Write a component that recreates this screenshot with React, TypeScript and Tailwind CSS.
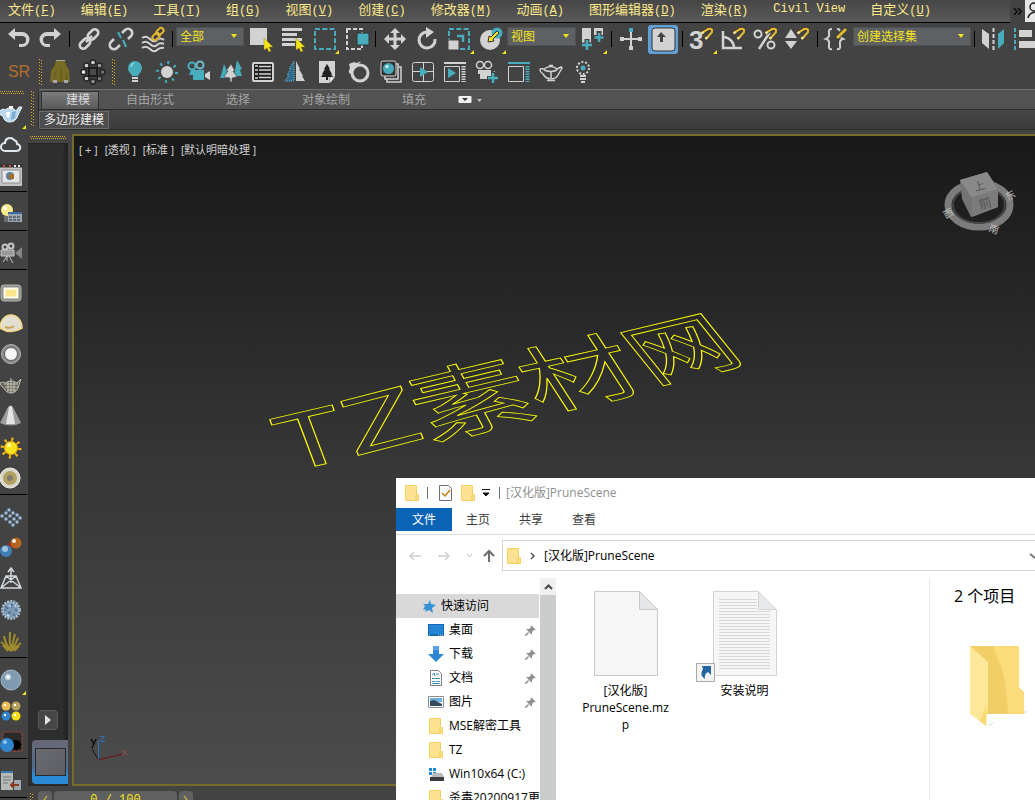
import type { ReactNode } from "react"

const LIGHT = "#d2d2d2"
const TEAL = "#47adbd"
const YELLOW = "#f5e31b"

const uiFont = "font-['Open_Sans','Noto_Sans_CJK_SC',sans-serif]"
const maxFont = "font-['Liberation_Sans','Noto_Sans_CJK_SC',sans-serif]"

const menuItems = [
  { label: "文件", key: "F" },
  { label: "编辑", key: "E" },
  { label: "工具", key: "T" },
  { label: "组", key: "G" },
  { label: "视图", key: "V" },
  { label: "创建", key: "C" },
  { label: "修改器", key: "M" },
  { label: "动画", key: "A" },
  { label: "图形编辑器", key: "D" },
  { label: "渲染", key: "R" },
  { label: "Civil View", key: "" },
  { label: "自定义", key: "U" },
]

function Icon({ children, size = 32 }: { children: ReactNode; size?: number }) {
  return (
    <svg viewBox={`0 0 ${size} ${size}`} width={size} height={size} fill="none" aria-hidden="true">
      {children}
    </svg>
  )
}

function Tool({ label, children }: { label: string; children: ReactNode }) {
  return (
    <button type="button" aria-label={label} className="size-8 shrink-0 hover:bg-white/10">
      <Icon>{children}</Icon>
    </button>
  )
}

function Sep() {
  return (
    <div className="flex h-8 w-[7px] shrink-0 items-center justify-center">
      <div className="h-4 w-px bg-black" />
    </div>
  )
}

function GripV({ className }: { className: string }) {
  return (
    <svg className={className} width="3" aria-hidden="true">
      <path d="M.5 0V100" stroke="#d9ae22" strokeDasharray="1 2" />
      <path d="M2.5 1V100" stroke="#d9ae22" strokeDasharray="1 2" />
    </svg>
  )
}

function GripH({ className }: { className: string }) {
  return (
    <svg className={className} height="3" aria-hidden="true">
      <path d="M0 .5H100" stroke="#d9ae22" strokeDasharray="1 1" />
      <path d="M1 2.5H100" stroke="#d9ae22" strokeDasharray="1 1" />
    </svg>
  )
}

function Dropdown({ label, value, className }: { label: string; value: string; className: string }) {
  return (
    <div className={`relative mt-1 h-[19px] shrink-0 ${className}`}>
      <select
        aria-label={label}
        className="block h-full w-full appearance-none border border-[#4e5052] bg-[#5d6164] px-[3px] text-[12px] leading-4 text-[#f5e31b]"
      >
        <option>{value}</option>
      </select>
      <svg className="pointer-events-none absolute right-[7px] top-[7px]" width="6" height="4" aria-hidden="true">
        <path d="M0 0h6L3 4z" fill={YELLOW} />
      </svg>
    </div>
  )
}

const corner = <path d="M31 27v4h-4z" fill={YELLOW} />
const cursor = <path d="M20 15v12l3-2 2 4 2-1-2-4h4z" fill={YELLOW} stroke="#8a7d10" strokeWidth=".4" />
const magnet = (
  <g fill="none">
    <path d="M16 10l6-4q5-1 4 3l-6 7" stroke="#3a3a3a" strokeWidth="4" />
    <path d="M16 10l6-4q5-1 4 3l-6 7" stroke="#e2b632" strokeWidth="2.200" />
    <path d="M15.500 10.500l2-1.500M21 14l-1.500 2" stroke="#f4e9a0" strokeWidth="2.200" />
  </g>
)

function MainToolbar() {
  return (
    <div className="flex h-[33px] items-start overflow-hidden pl-[2px]">
      <Tool label="撤消">
        <path d="M6 11l7-6v4h7a7 7 0 0 1 0 15h-3v-3h3a4 4 0 0 0 0-8h-7v4z" fill={LIGHT} />
      </Tool>
      <Tool label="重做">
        <path d="M27 11l-7-6v4h-7a7 7 0 0 0 0 15h3v-3h-3a4 4 0 0 1 0-8h7v4z" fill={LIGHT} />
      </Tool>
      <Sep />
      <Tool label="链接">
        <g stroke={LIGHT} strokeWidth="2.6">
          <rect x="14" y="8" width="12" height="7" rx="3.5" transform="rotate(-45 20 11.500)" />
          <rect x="6" y="17" width="12" height="7" rx="3.5" transform="rotate(-45 12 20.500)" />
          <path d="M13 19l6-6" />
        </g>
      </Tool>
      <Tool label="断开链接">
        <g stroke={LIGHT} strokeWidth="2.6">
          <path d="M17 10l3-3a4 4 0 0 1 6 6l-3 3" />
          <path d="M15 22l-3 3a4 4 0 0 1-6-6l3-3" />
        </g>
        <path d="M13 9l3 6M18 17l3 7" stroke={TEAL} strokeWidth="2" />
      </Tool>
      <Tool label="绑定">
        <path d="M5 15q4-3 8 1t7 1 7 0M5 20q4-3 8 1t7 1 7-1M5 25q4-3 8 1t7 1 7-2" stroke={LIGHT} strokeWidth="2" />
        <g stroke="#3a3a3a" strokeWidth="4">
          <path d="M17 15l8-8" strokeWidth="8" />
        </g>
        <g stroke="#e2b632" strokeWidth="2">
          <rect x="19" y="6" width="8" height="5" rx="2.500" transform="rotate(-45 23 8.500)" />
          <rect x="15" y="11" width="8" height="5" rx="2.500" transform="rotate(-45 19 13.500)" />
        </g>
      </Tool>
      <Sep />
      <Dropdown label="选择过滤器" value="全部" className="w-[68px]" />
      <Tool label="选择对象">
        <path d="M6 5h17v17H6z" fill={LIGHT} />
        {cursor}
      </Tool>
      <Tool label="按名称选择">
        <path d="M6 6.500h20M6 11.500h15M6 16.500h20M6 21.500h13" stroke={LIGHT} strokeWidth="3" />
        {cursor}
      </Tool>
      <Tool label="矩形选择区域">
        <path d="M7 6h20v20H7z" stroke={TEAL} strokeWidth="2" strokeDasharray="5 2.300" />
        {corner}
      </Tool>
      <Tool label="窗口交叉">
        <path d="M7 6h15v20H7z" stroke={LIGHT} strokeWidth="2" strokeDasharray="4 2" />
        <path d="M17 10h12v12H17z" fill={TEAL} stroke="#333" />
      </Tool>
      <Sep />
      <Tool label="移动">
        <path
          d="M16 5l5 5h-3.500v4.500H22V11l5 5-5 5v-3.500h-4.500V22H21l-5 5-5-5h3.500v-4.500H10V21l-5-5 5-5v3.500h4.500V10H11z"
          fill={LIGHT}
        />
      </Tool>
      <Tool label="旋转">
        <path d="M16 9a8 8 0 1 0 8 7" stroke={LIGHT} strokeWidth="3" />
        <path d="M15 4l8 5-8 6z" fill={LIGHT} />
      </Tool>
      <Tool label="缩放">
        <path d="M6 6h20v20H6z" stroke={TEAL} strokeWidth="2" strokeDasharray="5 2.300" />
        <path d="M5 17h11v10H5z" fill={LIGHT} stroke="#444" />
        <path d="M14 13h6v6" stroke={TEAL} strokeWidth="2.500" />
        {corner}
      </Tool>
      <Tool label="放置">
        <circle cx="15" cy="17" r="10" fill={LIGHT} />
        <circle cx="22" cy="10" r="5.500" fill={TEAL} />
        <path d="M13 19l1-6 2 1 6-6 2 2-6 6 1 2z" fill={YELLOW} stroke="#333" />
        {corner}
      </Tool>
      <Dropdown label="参考坐标系" value="视图" className="w-[69px]" />
      <Tool label="使用轴点中心">
        <path d="M6 5h9v17H6zM18 5h9v12h-9z" fill={LIGHT} />
        <path d="M11 16v12M5 22h12M23 8v13M17 14.500h12" stroke="#434343" strokeWidth="5" />
        <path d="M11 17v10M6 22h10M23 10v9M18.500 14.500h9" stroke={TEAL} strokeWidth="2.500" />
        {corner}
      </Tool>
      <Sep />
      <Tool label="选择并操纵">
        <path d="M16 8v16M8 16h16" stroke={LIGHT} strokeWidth="2" />
        <path d="M14 5h4v4h-4z" fill={TEAL} />
        <path d="M14 23h4v4h-4zM5 14h4v4H5zM23 14h4v4h-4z" fill={LIGHT} />
      </Tool>
      <button type="button" aria-label="键盘快捷键覆盖切换" aria-pressed="true" className="size-8 shrink-0">
        <Icon>
          <rect x="1" y="2" width="30" height="29" rx="3" fill="#63a0d8" />
          <rect x="5" y="5" width="23" height="23" rx="3" fill={LIGHT} stroke="#333" />
          <path d="M14 9l5 5h-3v5h-3v-5h-3z" fill="#444" />
        </Icon>
      </button>
      <Sep />
      <Tool label="捕捉开关">
        <text x="3" y="26" fontSize="26" fontWeight="700" fill={LIGHT} className="font-['Liberation_Sans',sans-serif]">
          3
        </text>
        {magnet}
        {corner}
      </Tool>
      <Tool label="角度捕捉">
        <path d="M5 8v17h19M6 14a11 11 0 0 1 10 11" stroke={LIGHT} strokeWidth="2.500" />
        {magnet}
      </Tool>
      <Tool label="百分比捕捉">
        <circle cx="8" cy="11" r="3.500" stroke={LIGHT} strokeWidth="2" />
        <circle cx="21" cy="22" r="3.500" stroke={LIGHT} strokeWidth="2" />
        <path d="M20 9L9 26" stroke={LIGHT} strokeWidth="2.500" />
        {magnet}
      </Tool>
      <Tool label="微调器捕捉">
        <path d="M9 6l6 9H3zM9 26l6-8H3z" fill={LIGHT} />
        {magnet}
      </Tool>
      <Sep />
      <Tool label="编辑命名选择集">
        <path d="M11 6q-4 0-3 4t-3 6q4 1 3 6t3 4M16 6q4 0 3 4t3 6q-4 1-3 6t-3 4" stroke={LIGHT} strokeWidth="2" />
        <path d="M25 5L15 16" stroke="#3a3a3a" strokeWidth="5" />
        <path d="M25 6l-9 9" stroke="#e2b632" strokeWidth="3" />
      </Tool>
      <Dropdown label="命名选择集" value="创建选择集" className="w-[118px]" />
      <Sep />
      <Tool label="镜像">
        <path d="M4 6l7 5v15l-7-6z" fill={LIGHT} />
        <path d="M26 6l-6 5v15l6-6z" fill={TEAL} />
        <path d="M15.500 5v23" stroke={LIGHT} strokeWidth="2" strokeDasharray="4 2" />
      </Tool>
      <Tool label="对齐">
        <path d="M5 5v23" stroke={TEAL} strokeWidth="2" strokeDasharray="4 2" />
        <path d="M9 7h13v7H9zM9 18h19v7H9z" fill={LIGHT} />
      </Tool>
    </div>
  )
}

function SecondToolbar() {
  return (
    <div className="flex h-8 items-center overflow-hidden pl-[3px]">
      <button type="button" className="size-8 shrink-0 text-center text-[16px] text-[#b3702e]">
        SR
      </button>
      <div className="w-[9px] shrink-0 pl-1">
        <GripV className="h-[27px]" />
      </div>
      <Tool label="布料">
        <path d="M12 4h9l1 5 3 5 1 12H6l1-11 4-6z" fill="#786b24" />
        <path d="M12 4.500h9" stroke="#aaa" />
        <path d="M12 15l-2 10M17 13v12M22 17l1 8" stroke="#615920" />
        <path d="M9 24h4v3H9zM20 24h4v3h-4z" fill="#a9a9a9" />
      </Tool>
      <Tool label="光环">
        <g fill="#cfcfcf" stroke="#242424" strokeWidth="1.500">
          <circle cx="17" cy="6.500" r="2.600" />
          <circle cx="17" cy="25.500" r="2.600" fill="#8a8a8a" />
          <circle cx="7.500" cy="16" r="2.600" fill="#f2f2f2" />
          <circle cx="26.500" cy="16" r="2.600" fill="#6c6c6c" />
          <circle cx="10.500" cy="9.500" r="2.600" />
          <circle cx="23.500" cy="9.500" r="2.600" fill="#9a9a9a" />
          <circle cx="10.500" cy="22.500" r="2.600" />
          <circle cx="23.500" cy="22.500" r="2.600" fill="#777" />
        </g>
        <rect x="13" y="12" width="8" height="8" stroke="#1d1d1d" strokeWidth="2" fill="#4a4a4a" />
      </Tool>
      <div className="w-[11px] shrink-0 pl-1">
        <GripV className="h-[27px]" />
      </div>
      <Tool label="灯光">
        <path d="M16 5a7 7 0 0 1 7 7c0 4-3 5-4 8h-6c-1-3-4-4-4-8a7 7 0 0 1 7-7z" fill={TEAL} />
        <path d="M13 22h6M13 25h6" stroke={LIGHT} strokeWidth="2" />
        <path d="M12 11q0-3 3-4" stroke="#bfe6ec" />
      </Tool>
      <Tool label="太阳">
        <circle cx="16" cy="16" r="6" fill={LIGHT} />
        <circle cx="16" cy="16" r="9.500" stroke={TEAL} strokeWidth="3" strokeDasharray="2 5.460" />
      </Tool>
      <Tool label="摄影机">
        <circle cx="9" cy="10" r="3.500" stroke={TEAL} strokeWidth="2" />
        <circle cx="17" cy="9" r="3.500" stroke="#6fbccb" strokeWidth="2" />
        <path d="M8 14h13v10H10v-5H6z" fill={TEAL} />
        <path d="M22 18l5-3v9l-5-3z" fill={LIGHT} />
      </Tool>
      <Tool label="森林">
        <path d="M9 8l4 9-1 5H5l2-6zM22 4l5 9-2 1 2 6h-8z" fill={TEAL} />
        <path d="M16 8l4 7h-2l4 6-5 1v4h-2v-4l-6-1 4-6h-2z" fill={LIGHT} stroke="#434343" strokeWidth=".6" />
      </Tool>
      <Tool label="列表">
        <rect x="6" y="7" width="20" height="18" rx="1" stroke={LIGHT} strokeWidth="2" fill="#222" />
        <path d="M8 10h3M8 14h3M8 18h3M8 22h3M12 10.500h12M12 14h12M12 18h12M12 21.500h12" stroke={LIGHT} strokeWidth="1.500" />
      </Tool>
      <Tool label="树木对称">
        <path d="M15 5v20H6l4-6H8l4-6h-2z" fill="#2d6c8f" stroke="#75b5cc" strokeDasharray="1 1" />
        <path d="M17 5l4 8h-1l4 7h-1l3 5h-9z" fill={LIGHT} />
      </Tool>
      <Tool label="植物库">
        <path d="M8 5h16v16l-5 6H8z" fill={LIGHT} />
        <path d="M16 8l3 5h-1l3 5h-1l2 3h-5v3h-2v-3h-5l2-3h-1l3-5h-1z" fill="#222" />
        <path d="M24 21h-5v6z" fill="#fff" stroke="#555" strokeWidth=".5" />
      </Tool>
      <Tool label="环">
        <circle cx="17" cy="17" r="8" stroke={LIGHT} strokeWidth="3" />
        <path d="M6 8q5-3 8-1l4-2-3 4-5 3-2 6q-4-1-1-6z" fill={LIGHT} />
      </Tool>
      <Tool label="材质">
        <path d="M12 23v3h14V11h-3M10 20v3h13V8h-3" stroke={LIGHT} strokeWidth="1.500" />
        <rect x="6" y="5" width="15" height="15" rx="2" stroke={LIGHT} fill="#333" />
        <circle cx="13.500" cy="12.500" r="5.500" fill={TEAL} />
        <circle cx="12" cy="10.500" r="1.500" fill="#e6f7fa" />
      </Tool>
      <Tool label="渲染设置">
        <rect x="5.500" y="6.500" width="21" height="19" rx="2" stroke={LIGHT} />
        <path d="M5 15.500h22M16.500 6v20" stroke={LIGHT} />
        <path d="M13 11l8 5-8 5z" fill={TEAL} />
      </Tool>
      <Tool label="渲染帧">
        <path d="M5 7h22" stroke={LIGHT} strokeWidth="2" />
        <path d="M5.500 10.500v15h15v-15z" stroke={LIGHT} />
        <path d="M9 12l8 5-8 5z" fill={TEAL} />
        <path d="M24.500 10v16" stroke={LIGHT} strokeWidth="4" strokeDasharray="1.500 1" />
      </Tool>
      <Tool label="添加摄影机">
        <circle cx="9" cy="9" r="3.500" stroke={LIGHT} strokeWidth="1.500" />
        <circle cx="17" cy="9" r="3.500" stroke={LIGHT} strokeWidth="1.500" />
        <path d="M7 14h13v3l4-2v8H9v-5H7z" fill={LIGHT} />
        <path d="M22 16v11M16 22h12" stroke="#434343" strokeWidth="4" />
        <path d="M22 17v10M17 22h10" stroke={TEAL} strokeWidth="2.500" />
      </Tool>
      <Tool label="面板">
        <path d="M5 7h22" stroke={TEAL} strokeWidth="2" />
        <path d="M5.500 10.500v15h15v-15z" stroke={LIGHT} />
        <path d="M24.500 10v16" stroke={TEAL} strokeWidth="4" strokeDasharray="1.500 1" />
      </Tool>
      <Tool label="渲染">
        <path d="M9 13q7-5 13 0l4-2 1 1-4 7q-2 4-7 4t-8-5q-3-2-3-4t4-1z" stroke={LIGHT} strokeWidth="1.500" />
        <path d="M9 14q7 3 13 0M16 15v7M14 9.500h4M12 24.500h8" stroke={LIGHT} strokeWidth="1.500" />
      </Tool>
      <Tool label="环境灯">
        <circle cx="16" cy="12" r="6" stroke={LIGHT} strokeWidth="2" strokeDasharray="2 1.700" />
        <circle cx="16" cy="12" r="2.500" fill={TEAL} />
        <path d="M13 20h6M13 23h6M14 26h4" stroke={LIGHT} strokeWidth="2" />
      </Tool>
    </div>
  )
}

const sideGroups: { label: string; art: ReactNode }[][] = [
  [
    {
      label: "茶壶",
      art: (
        <>
          <path d="M1 12q3-2 4 0 6-5 11 1l3-4h3l-4 8q-2 7-8 7t-7-6q-4-1-4-4z" fill="#b9d8ee" stroke="#eaf5fc" />
          <path d="M9 8h4v3H9z" fill="#fff" />
          <path d="M12 14l4-1-1 7-4 2z" fill="#79add3" />
          <path d="M6 14l4 0-1 6-2-1z" fill="#fff" />
          <path d="M26 27v4h-4z" fill={YELLOW} />
        </>
      ),
    },
    {
      label: "云",
      art: <path d="M5 22a4 4 0 0 1 0-8 5 5 0 0 1 9-3 4 4 0 0 1 3 4q4 1 3 5-1 2-4 2z" stroke="#e1e8ee" strokeWidth="2" />,
    },
    {
      label: "渲染预览",
      art: (
        <>
          <path d="M0 6h22v20H0z" fill="#c4c4c4" />
          <path d="M0 6h22" stroke="#333" strokeWidth="3" />
          <path d="M3 6h2M9 6h2" stroke="#c0504d" strokeWidth="2" />
          <path d="M14 6h2M18 6h2" stroke="#e6e6e6" strokeWidth="2" />
          <path d="M2 10h18v13H2z" fill="#e5e5e5" stroke="#8a9299" />
          <circle cx="10" cy="16" r="4" fill="#5780a3" />
          <path d="M9 14h5v5H9z" fill="#a66f28" />
        </>
      ),
    },
  ],
  [
    {
      label: "灯光列表",
      art: (
        <>
          <circle cx="7" cy="11" r="6" fill="#f7e98b" />
          <circle cx="5" cy="9" r="2" fill="#fffdf0" />
          <path d="M4 17h6v6H4z" fill="#6b6b6b" />
          <path d="M8 13h14v10H8z" fill="#9aa6b3" />
          <path d="M8 14h14" stroke="#3d6aa0" strokeWidth="2" />
          <path d="M9 18h12M9 21h12" stroke="#333" strokeDasharray="3 1" />
        </>
      ),
    },
  ],
  [
    {
      label: "摄影机",
      art: (
        <>
          <circle cx="5" cy="9" r="2.500" stroke="#c5c5c5" strokeWidth="2" />
          <circle cx="11" cy="8" r="2.500" stroke="#c5c5c5" strokeWidth="2" />
          <path d="M1 12h13v6H1zM9 18l4 7M7 18l-4 6M7 18v5" stroke="#c5c5c5" fill="#9a9a9a" />
          <path d="M15 15l7-6v12z" fill="#858585" />
        </>
      ),
    },
  ],
  [
    {
      label: "平面灯光",
      art: (
        <>
          <rect x="1" y="8" width="20" height="16" rx="3" fill="#8d8f88" stroke="#b6b8b0" />
          <rect x="4" y="11" width="14" height="10" fill="#fff6c8" stroke="#fff" />
          <path d="M6 13h10v6H6z" fill="#fbe58b" />
        </>
      ),
    },
    {
      label: "穹顶灯光",
      art: (
        <>
          <path d="M0 20a11 13 0 0 1 22 0q-11 7-22 0z" fill="#e2dfd2" stroke="#f2d984" strokeWidth="1.500" />
          <path d="M5 19q6 2 9-1" stroke="#c8a254" strokeWidth="2" />
        </>
      ),
    },
    {
      label: "圆形灯光",
      art: (
        <>
          <circle cx="11" cy="15" r="9.500" fill="#898989" stroke="#b5b5b5" />
          <circle cx="11" cy="15" r="6.500" fill="#f4f6f4" stroke="#5a5a5a" />
        </>
      ),
    },
    {
      label: "网格灯光",
      art: (
        <>
          <path d="M0 13q3-2 5 0 6-4 12 0l4-4-3 9q-2 5-7 5t-7-5q-4-2-4-5z" stroke="#bdbab0" fill="#65635c" />
          <path d="M4 14h14M5 17h13M7 20h9M8 12v10M11 8v15M14 12v10" stroke="#c7c4ba" />
        </>
      ),
    },
    {
      label: "光锥",
      art: (
        <>
          <path d="M8 6q3-3 5 0l8 16q-10 5-21 0z" fill="#9c9c9c" />
          <path d="M9 6q2-2 3 0l3 17H6z" fill="#e4e4e4" />
        </>
      ),
    },
    {
      label: "太阳光",
      art: (
        <>
          <circle cx="11" cy="16" r="8.500" stroke="#f0b812" strokeWidth="4" strokeDasharray="2 4.680" />
          <circle cx="11" cy="16" r="6.500" fill="#f9e41c" stroke="#e8a40c" />
          <circle cx="9" cy="13" r="2" fill="#fffbb0" />
        </>
      ),
    },
    {
      label: "光域网",
      art: (
        <>
          <circle cx="10" cy="15" r="10" fill="#d9d6cb" stroke="#f2f0e8" />
          <circle cx="10" cy="15" r="7" fill="#b3a162" />
          <circle cx="10" cy="15" r="3" fill="#7f7b70" />
        </>
      ),
    },
  ],
  [
    {
      label: "粒子",
      art: (
        <>
          <path d="M1 14l12 9 8-9L9 8z" stroke="#444c55" />
          {[
            [2, 14], [6, 11], [9, 8], [6, 17], [10, 14], [13, 11], [10, 20], [14, 17], [17, 13], [13, 23], [17, 20], [20, 16],
          ].map(([x, y]) => (
            <circle key={`${x}-${y}`} cx={x} cy={y} r="1.800" fill="#a6bdd3" stroke="#55708c" strokeWidth=".5" />
          ))}
        </>
      ),
    },
    {
      label: "融球",
      art: (
        <>
          <path d="M6 16l10-8" stroke="#8e3322" strokeWidth="6" />
          <circle cx="16" cy="10" r="5.500" fill="#b5651d" />
          <circle cx="6" cy="18" r="6" fill="#3e7fb5" />
          <circle cx="5" cy="16" r="3" fill="#9cc4df" />
          <circle cx="14" cy="8" r="2" fill="#eee" />
        </>
      ),
    },
    {
      label: "线框金字塔",
      art: <path d="M11 6v6M8 8l3-4 3 4M6 12h10l5 12H1zM6 12l15 12M16 12L1 24M11 12v7" stroke="#d2d8dd" strokeWidth="1.500" />,
    },
    {
      label: "岩石",
      art: (
        <>
          <circle cx="11" cy="15" r="8.500" fill="#7d99b5" />
          <circle cx="11" cy="15" r="8.500" stroke="#a3b7cb" strokeWidth="3" strokeDasharray="2 1" />
          <path d="M5 11l3 3M12 9l-1 4M15 14l2 2M8 18l3-1M13 19l2 2M4 15h2" stroke="#4a6b8e" strokeWidth="1.500" />
          <path d="M9 10l2 2M15 10l1 2M7 20l2 1" stroke="#d3dfea" strokeWidth="1.500" />
        </>
      ),
    },
    {
      label: "草",
      art: (
        <path
          d="M11 25Q6 19 1 16M11 25Q5 17 4 10M11 25Q9 15 10 6M11 25Q13 16 15 8M11 25Q16 18 18 12M11 25Q17 20 21 17M8 25L3 19M14 25l5-5"
          stroke="#a08b2c"
          strokeWidth="2"
        />
      ),
    },
  ],
  [
    {
      label: "球体",
      art: (
        <>
          <circle cx="11" cy="15" r="10" fill="#809ab2" stroke="#a4b7c8" />
          <circle cx="8" cy="12" r="3" fill="#c9d8e4" />
          <circle cx="8" cy="12" r="1.500" fill="#fff" />
          <path d="M26 26v4h-4z" fill={YELLOW} />
        </>
      ),
    },
    {
      label: "材质球",
      art: (
        <>
          <circle cx="6" cy="10" r="4.500" fill="#e8bd58" />
          <circle cx="16" cy="10" r="4.500" fill="#b5a15c" />
          <circle cx="6" cy="20" r="4.500" fill="#2f86cc" />
          <circle cx="16" cy="20" r="4.500" fill="#f4df1b" />
          <path d="M4 8h2v2H4zM14 8h2v2h-2zM4 18h2v2H4zM14 18h2v2h-2z" fill="#fff" />
        </>
      ),
    },
    {
      label: "渲染区域",
      art: (
        <>
          <path d="M3 5h19v19H3z" stroke="#a14638" strokeDasharray="3 1" fill="#2a2a2a" />
          <circle cx="16" cy="18" r="5" fill="#000" />
          <circle cx="7" cy="18" r="7" fill="#2f86cc" />
          <circle cx="5" cy="15" r="2" fill="#8cc4ee" />
        </>
      ),
    },
  ],
  [
    {
      label: "脚本",
      art: (
        <>
          <path d="M1 6h12v18H1z" fill="#b7babb" />
          <path d="M1 6h12" stroke="#3a78ad" strokeWidth="2" />
          <path d="M3 11h8M3 14h8M3 17h5" stroke="#777" />
          <path d="M14 14h7v10h-7z" fill="#9fa8ae" />
          <path d="M19 19h-8M14 16l-3 3 3 3" stroke="#8a3d1e" strokeWidth="2" />
        </>
      ),
    },
  ],
]

function SideToolbar() {
  return (
    <aside className="w-7 shrink-0 overflow-hidden bg-[#434343]">
      <div className="h-[5px] pt-[2px]">
        <GripH className="block w-6" />
      </div>
      {sideGroups.map((group, index) => (
        <div key={index} className={`mr-px border-b border-black ${index === 0 ? "pt-1" : "pt-[7px]"}`}>
          {group.map((item) => (
            <button key={item.label} type="button" aria-label={item.label} className="block h-[31px] w-full">
              <svg viewBox="0 0 27 31" width="27" height="31" fill="none" aria-hidden="true">
                {item.art}
              </svg>
            </button>
          ))}
        </div>
      ))}
    </aside>
  )
}

function Ribbon() {
  return (
    <div className="flex h-[41px]">
      <div className="w-[10px] shrink-0 pl-[3px] pt-[2px]">
        <GripV className="h-9" />
      </div>
      <div className="min-w-0 flex-1 border-l border-[#2d2d2d] text-[12px]">
        <div className="flex h-[21px] items-end whitespace-nowrap border-b border-t border-b-[#2d2d2d] border-t-[#707070] bg-[#525252] pl-[2px] text-[#a6a6a6]">
          <button
            type="button"
            className="h-[18px] w-[58px] border border-b-0 border-[#303030] bg-gradient-to-b from-[#7c7c7c] to-[#595959] pl-4 leading-[17px] text-[#d8d8d8]"
          >
            建模
          </button>
          <div className="ml-[27px] flex h-[18px] items-end gap-[52px] leading-[18px]">
            <button type="button">自由形式</button>
            <button type="button">选择</button>
            <button type="button">对象绘制</button>
            <button type="button">填充</button>
          </div>
          <button type="button" aria-label="显示选项" className="ml-8 h-[18px]">
            <svg width="24" height="10" aria-hidden="true">
              <rect x=".5" y="1" width="13" height="7" rx="1" fill="#f1f1f1" />
              <path d="M4 3h6L7 6z" fill="#333" />
              <path d="M19 4h5l-2.500 3z" fill="#bdbdbd" />
            </svg>
          </button>
        </div>
        <div className="flex h-5 items-center border-b border-[#2b2b2b] bg-gradient-to-b from-[#474747] to-[#3a3a3a]">
          <button
            type="button"
            className="h-[18px] border border-[#6a6a6a] bg-[#4d4d4d] px-1 leading-[17px] text-[#ececec]"
          >
            多边形建模
          </button>
        </div>
      </div>
    </div>
  )
}

// Spline text lying on the ground plane, each letter carries its own projection.
const splineText = [
  { char: "T", matrix: "matrix(1.16 -0.27 0.27 0.72 212 337)" },
  { char: "Z", matrix: "matrix(1.28 -0.33 0.3 0.72 278 321)" },
  { char: "素", matrix: "matrix(1.15 -0.27 0.4 0.73 354 304)" },
  { char: "材", matrix: "matrix(1.09 -0.24 0.44 0.68 466 275)" },
  { char: "网", matrix: "matrix(0.97 -0.23 0.5 0.62 577 247)" },
]

function SplineText() {
  return (
    <svg className="absolute left-0 top-0 h-[360px] w-[700px]" fill="none" aria-label="TZ素材网">
      {splineText.map(({ char, matrix }) => (
        <text
          key={char}
          transform={matrix}
          fontSize="100"
          stroke="#ffff00"
          vectorEffect="non-scaling-stroke"
          shapeRendering="crispEdges"
          className="font-['Noto_Sans_CJK_SC',sans-serif]"
        >
          {char}
        </text>
      ))}
    </svg>
  )
}

function ViewCube() {
  return (
    <svg className="absolute right-4 top-7" width="84" height="78" viewBox="-6 -4 84 78" fill="none" aria-hidden="true">
      <ellipse cx="38" cy="37" rx="31" ry="22" stroke="#7c7c7c" strokeWidth="7" />
      <ellipse cx="38" cy="37" rx="26" ry="18" stroke="#454545" strokeWidth="2" />
      <path d="M19 12l27-8 11 17v18l-27 10-9-18z" fill="#747474" />
      <path d="M19 12l27-8 11 17-26 9z" fill="#898989" />
      <path d="M31 29l26-8v18L31 49z" fill="#7b7b7b" />
      <g fill="#585858" className="font-['Noto_Sans_CJK_SC',sans-serif]" textAnchor="middle">
        <text x="38" y="22" fontSize="11" transform="rotate(-15 38 17)">上</text>
        <text x="44" y="40" fontSize="13" transform="rotate(-15 44 35)">前</text>
      </g>
      <g fill="#bdbdbd" className="font-['Noto_Sans_CJK_SC',sans-serif]" textAnchor="middle" fontSize="10">
        <text x="7" y="49" transform="rotate(-30 7 45)">西</text>
        <text x="69" y="31" transform="rotate(-30 69 27)">东</text>
        <text x="53" y="65" transform="rotate(20 53 61)">南</text>
      </g>
    </svg>
  )
}

function Viewport() {
  return (
    <section className="relative min-w-0 flex-1 overflow-hidden border-2 border-r-0 border-[#756b2b] bg-gradient-to-b from-[#181818] via-[#363636] to-[#4c4c4c]">
      <div className="flex gap-[7px] pl-[5px] pt-[5px] text-[11px] leading-[18px] text-[#d0d0d0]">
        <button type="button">[ + ]</button>
        <button type="button">[透视 ]</button>
        <button type="button">[标准 ]</button>
        <button type="button">[默认明暗处理 ]</button>
      </div>
      <SplineText />
      <ViewCube />
      <svg className="absolute bottom-5 left-4" width="40" height="30" fill="none" aria-hidden="true">
        <path d="M8 25L2 15" stroke="#111" />
        <path d="M1 5l3 5M6 5L2 14" stroke="#111" strokeWidth="1.500" />
        <path d="M8.500 26V6" stroke="#2d75bb" />
        <path d="M10 2.500h4.500l-4 5h4" stroke="#2d75bb" />
        <path d="M8 26l25-6" stroke="#700d0d" />
        <path d="M32 16l5 5M37 16l-5 5" stroke="#a0564d" />
      </svg>
    </section>
  )
}

function LayoutPanel() {
  return (
    <div className="flex w-11 shrink-0 flex-col pt-[2px]">
      <GripH className="ml-[2px] w-9 shrink-0" />
      <div className="mr-1 mt-1 flex flex-1 flex-col items-end justify-end bg-[#2e2e2e] pb-[2px] shadow-[inset_-3px_0_3px_#222]">
        <button
          type="button"
          aria-label="展开"
          className="mb-[10px] mr-[10px] flex size-5 items-center justify-center rounded-sm border border-[#5a5a5a] bg-[#464646]"
        >
          <svg width="6" height="10" aria-hidden="true">
            <path d="M0 0l6 5-6 5z" fill="#e3e3e3" />
          </svg>
        </button>
        <button
          type="button"
          aria-label="视口布局"
          className="h-11 w-9 rounded-l-sm bg-gradient-to-b from-[#66687a] from-10% via-[#4c6c8d] via-60% to-[#2a8ad6] to-80% pl-[3px] pr-[2px]"
        >
          <div className="h-7 border border-[#2a2a2a] bg-gradient-to-br from-[#696b70] to-[#5c5e63]" />
        </button>
      </div>
    </div>
  )
}

function TimeSlider() {
  return (
    <div className="flex h-[14px] shrink-0 overflow-hidden pl-[2px] pt-[5px]">
      <GripV className="mr-[5px] mt-[2px] h-3" />
      <button type="button" aria-label="上一帧" className="h-[18px] w-[14px] shrink-0 rounded-t-sm bg-[#606060]">
        <svg width="14" height="14" fill="none" aria-hidden="true">
          <path d="M9 3L6 7l3 4" stroke={YELLOW} />
        </svg>
      </button>
      <button
        type="button"
        className="mx-[2px] h-[18px] w-[123px] shrink-0 rounded-t-sm bg-[#606060] font-['Liberation_Mono',monospace] text-[12px] leading-[14px] text-[#f5e31b]"
      >
        0 / 100
      </button>
      <button type="button" aria-label="下一帧" className="h-[18px] w-[14px] shrink-0 rounded-t-sm bg-[#606060]">
        <svg width="14" height="14" fill="none" aria-hidden="true">
          <path d="M5 3l3 4-3 4" stroke={YELLOW} />
        </svg>
      </button>
    </div>
  )
}

function FolderIcon() {
  return (
    <svg width="14" height="16" viewBox="0 0 14 16" className="shrink-0" aria-hidden="true">
      <path d="M.5 .5h11v9h2v6H.5z" fill="#fde391" stroke="#f5d163" />
      <path d="M11 9.500v6" stroke="#f0c950" />
    </svg>
  )
}

function PinIcon() {
  return (
    <svg width="11" height="11" viewBox="0 0 11 11" fill="none" className="shrink-0" aria-hidden="true">
      <path d="M6 0l5 5-2 0-2 2v3L1 4h3l2-2z" fill="#8c8f92" />
      <path d="M3.500 7.500L0 11" stroke="#8c8f92" strokeWidth="1.500" />
    </svg>
  )
}

const navEntries: { label: string; pinned?: boolean; icon: ReactNode }[] = [
  {
    label: "桌面",
    pinned: true,
    icon: (
      <svg width="16" height="12" aria-hidden="true">
        <path d="M0 0h16v12H0z" fill="#1467b3" />
        <path d="M1 1h14v9H1z" fill="#2385d6" />
        <path d="M1 11h2M10 11h5" stroke="#cfe6f8" strokeDasharray="1 1" />
      </svg>
    ),
  },
  {
    label: "下载",
    pinned: true,
    icon: (
      <svg width="16" height="16" aria-hidden="true">
        <path d="M5 0h6v8h5l-8 8-8-8h5z" fill="#2c86d2" />
        <path d="M5 0h6v4H5z" fill="#5ba4df" />
      </svg>
    ),
  },
  {
    label: "文档",
    pinned: true,
    icon: (
      <svg width="12" height="16" fill="none" aria-hidden="true">
        <path d="M.5 .5h8l3 3v12H.5z" fill="#fff" stroke="#7c8185" />
        <path d="M2 5l2-2 1 3M6 4h3M2 8.500h8M2 11.500h3M6 11.500h4M2 13.500h8" stroke="#3c93b4" />
      </svg>
    ),
  },
  {
    label: "图片",
    pinned: true,
    icon: (
      <svg width="16" height="12" aria-hidden="true">
        <path d="M.5 .5h15v11H.5z" fill="#fff" stroke="#8b8f92" />
        <path d="M2 2h12v4H2z" fill="#6db0e3" />
        <path d="M2 5l4-1 8 4v2H2z" fill="#37495c" />
      </svg>
    ),
  },
  { label: "MSE解密工具", icon: <FolderIcon /> },
  { label: "TZ", icon: <FolderIcon /> },
  {
    label: "Win10x64 (C:)",
    icon: (
      <svg width="15" height="13" aria-hidden="true">
        <path d="M0 0h3v3H0zM4 0h3v3H4zM0 4h3v3H0zM4 4h3v3H4z" fill="#1c86d6" />
        <path d="M4 5h9l2 4H2z" fill="#b9bcbe" />
        <path d="M1 9h14v4H1z" fill="#3b3e40" />
      </svg>
    ),
  },
  { label: "杀毒20200917更", icon: <FolderIcon /> },
]

function NavPane() {
  return (
    <nav className="w-36 shrink-0 overflow-hidden pt-[23px] text-[12px] text-black">
      <a href="#quick" className="mr-px flex h-6 items-center gap-[5px] bg-[#d9d9d9] pl-[26px]">
        <svg width="14" height="13" viewBox="0 0 14 13" aria-hidden="true">
          <path d="M8 0l1 4 5 1-4 3 1 5-4-3-4 2 1-3-3 1 2-4-2-2h5z" fill="#3592d6" />
        </svg>
        快速访问
      </a>
      {navEntries.map((entry) => (
        <a key={entry.label} href="#entry" className="flex h-6 items-center whitespace-nowrap pl-8 pr-[4px]">
          <span className="flex w-[21px] shrink-0">
            <span className="flex w-4 justify-center">{entry.icon}</span>
          </span>
          <span className="flex-1">{entry.label}</span>
          {entry.pinned && <PinIcon />}
        </a>
      ))}
    </nav>
  )
}

function FileTile({ lines, children }: { lines: string[]; children: ReactNode }) {
  return (
    <button type="button" className="flex w-[119px] flex-col items-center text-[12px] leading-[17px]">
      {children}
      <span className="mt-[6px]">
        {lines.map((line) => (
          <span key={line} className="block">
            {line}
          </span>
        ))}
      </span>
    </button>
  )
}

function Explorer() {
  return (
    <section className={`absolute bottom-0 left-[396px] right-0 top-[478px] flex flex-col overflow-hidden bg-white text-black ${uiFont}`}>
      <header className="flex h-[30px] shrink-0 items-center pl-[9px] text-[12px] text-[#8f8f8f]">
        <FolderIcon />
        <div className="ml-[8px] mr-[11px] h-3 w-px bg-[#777]" />
        <svg width="13" height="16" fill="none" aria-hidden="true">
          <path d="M.5 .5h9l3 3v12H.5z" fill="#fafafa" stroke="#6f7377" />
          <path d="M3 8l3 3 5-6" stroke="#c77d1c" strokeWidth="1.500" />
        </svg>
        <div className="w-[9px]" />
        <FolderIcon />
        <svg width="8" height="8" className="mx-[7px]" aria-hidden="true">
          <path d="M0 .5h8M1 4h6L4 7z" stroke="#111" fill="#111" strokeWidth="1" />
        </svg>
        <div className="ml-[2px] mr-[6px] h-3 w-px bg-[#777]" />
        [汉化版]PruneScene
      </header>
      <div className="flex h-[27px] shrink-0 items-start border-b border-[#dadbdc] text-[12px] leading-[24px] text-[#3b3b3b]">
        <button type="button" className="h-[23px] w-14 bg-[#0a63b5] text-white">
          文件
        </button>
        <div className="flex gap-[29px] pl-[14px]">
          <button type="button">主页</button>
          <button type="button">共享</button>
          <button type="button">查看</button>
        </div>
      </div>
      <div className="mt-[5px] flex h-[31px] shrink-0 items-center">
        <div className="flex w-[106px] shrink-0 items-center gap-[17px] pl-[13px]">
          <svg width="12" height="10" fill="none" className="shrink-0" aria-hidden="true">
            <path d="M12 5H1M5 1L1 5l4 4" stroke="#cfcfcf" strokeWidth="1.500" />
          </svg>
          <svg width="12" height="10" fill="none" className="shrink-0" aria-hidden="true">
            <path d="M0 5h11M7 1l4 4-4 4" stroke="#cfcfcf" strokeWidth="1.500" />
          </svg>
          <svg width="34" height="14" fill="none" className="shrink-0" aria-hidden="true">
            <path d="M0 5l2.500 3L5 5" stroke="#c4c4c4" />
            <path d="M22 13V2M17 7l5-5 5 5" stroke="#6d6d6d" strokeWidth="2" />
          </svg>
        </div>
        <div className="flex h-[31px] flex-1 items-center border border-r-0 border-[#d4d5d6] pl-1 text-[12px]">
          <FolderIcon />
          <svg width="5" height="8" fill="none" className="mx-[9px]" aria-hidden="true">
            <path d="M1 1l3 3-3 3" stroke="#555" strokeWidth="1.500" />
          </svg>
          <button type="button">[汉化版]PruneScene</button>
          <svg width="6" height="6" fill="none" className="ml-auto" aria-hidden="true">
            <path d="M1 1l5 4" stroke="#777" strokeWidth="2" />
          </svg>
        </div>
      </div>
      <div className="flex min-h-0 flex-1">
        <NavPane />
        <div className="mt-[7px] w-4 shrink-0 bg-[#cbcdcd]">
          <div className="flex h-[17px] items-center justify-center bg-[#f0f0f0]">
            <svg width="9" height="6" fill="none" aria-hidden="true">
              <path d="M1 5l3.500-3.500L8 5" stroke="#4a4a4a" strokeWidth="2" />
            </svg>
          </div>
        </div>
        <div className="flex flex-1 items-start pl-[10px] pt-5">
          <FileTile lines={["[汉化版]", "PruneScene.mz", "p"]}>
            <svg width="64" height="85" fill="none" aria-hidden="true">
              <path d="M.5 .5h45l18 18v66H.5z" fill="#f6f6f6" stroke="#c9c9c9" />
              <path d="M45.500 .5v18h18z" fill="#e4e6e8" stroke="#c9c9c9" />
            </svg>
          </FileTile>
          <FileTile lines={["安装说明"]}>
            <svg width="98" height="91" viewBox="0 0 98 91" fill="none" className="-mb-[6px]" aria-hidden="true">
              <path d="M17.500 .5h45l18 18v66h-63z" fill="#f6f6f7" stroke="#d3d4d6" />
              <path d="M62.500 .5v18h18z" fill="#e9eaec" stroke="#d3d4d6" />
              <path d="M23 8.500h38M23 11.500h38M23 14.500h38M23 17.500h38" stroke="#d4d6d9" />
              {Array.from({ length: 20 }, (_, i) => (
                <path key={i} d={`M23 ${20.5 + i * 3}h51`} stroke="#d4d6d9" />
              ))}
              <path d="M.5 72.500h18v18H.5z" fill="#f3f3f3" stroke="#a9a9a9" />
              <path d="M6 75h9v9l-3-3q-4 2-3 7-6-4-2-10z" fill="#26679f" />
            </svg>
          </FileTile>
        </div>
        <aside className="mt-[7px] w-[106px] shrink-0 border-l border-[#ededed] pl-6 pt-[6px]">
          <h2 className="whitespace-nowrap text-[16px] leading-6">2 个项目</h2>
          <svg width="60" height="84" viewBox="0 0 60 84" className="ml-4 mt-[37px]" aria-hidden="true">
            <path d="M50 68l9-3-4 3zM18 80l8-4-6 5z" fill="#e6e6e6" />
            <path d="M0 1h49v41l5 5v22H17V20z" fill="#fbdc7b" />
            <path d="M0 1h23q5 14 8 20 6 18 7 48H17V20z" fill="#f1cf66" />
            <path d="M0 1l18 16v42l-2 22L0 69z" fill="#fde89a" />
            <path d="M16 60v21l-6-5z" fill="#fbd974" />
          </svg>
        </aside>
      </div>
    </section>
  )
}

export default function App() {
  return (
    <main className={`relative flex h-screen flex-col overflow-hidden bg-[#434343] ${maxFont}`}>
      <header className="flex h-[23px] shrink-0 overflow-hidden">
        <nav className="flex min-w-0 flex-1 gap-[25px] overflow-hidden whitespace-nowrap border-b border-black bg-gradient-to-b from-[#464646] to-[#595959] pl-2 text-[13px] leading-[19px] text-[#fbe98a]">
          {menuItems.map((item) => (
            <button key={item.label} type="button" className="flex shrink-0 items-baseline">
              {item.key ? item.label : <span className="font-['Liberation_Mono',monospace] text-[12px]">{item.label}</span>}
              {item.key && (
                <span className="font-['Liberation_Mono',monospace] text-[12px]">
                  (<u>{item.key}</u>)
                </span>
              )}
            </button>
          ))}
        </nav>
        <button type="button" aria-label="更多" className="flex w-[15px] shrink-0 items-center justify-center">
          <svg width="9" height="7" fill="none" aria-hidden="true">
            <path d="M1 0l3 3.500L1 7M5 0l3 3.500L5 7" stroke="#0a0a0a" strokeWidth="1.500" />
          </svg>
        </button>
        <button type="button" aria-label="登录" className="h-[22px] w-[10px] shrink-0 overflow-hidden bg-[#e6e6e6]">
          <svg width="10" height="22" fill="none" aria-hidden="true">
            <circle cx="9" cy="7" r="4" stroke="#222" strokeWidth="1.500" />
            <path d="M3 18q1-5 7-6" stroke="#222" strokeWidth="1.500" />
          </svg>
        </button>
      </header>
      <MainToolbar />
      <SecondToolbar />
      <div className="flex min-h-0 flex-1 pt-px">
        <SideToolbar />
        <div className="flex min-w-0 flex-1 flex-col">
          <Ribbon />
          <div className="flex min-h-0 flex-1 pt-1">
            <LayoutPanel />
            <Viewport />
          </div>
          <TimeSlider />
        </div>
      </div>
      <Explorer />
    </main>
  )
}
